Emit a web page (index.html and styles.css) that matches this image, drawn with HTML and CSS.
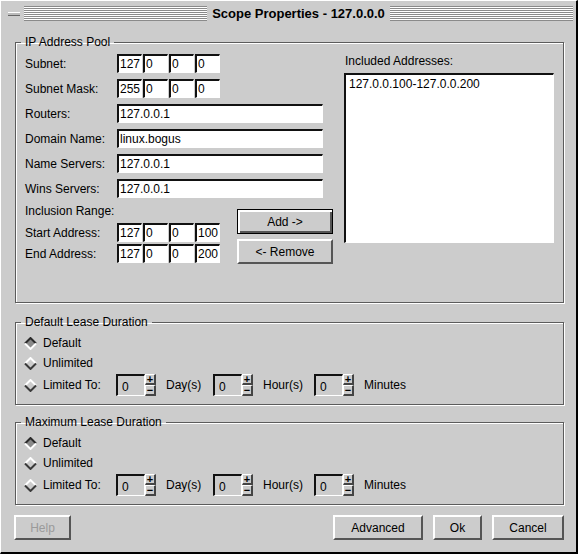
FILE: index.html
```html
<!DOCTYPE html>
<html lang="en">
<head>
    <meta charset="UTF-8">
    <title>Scope Properties - 127.0.0.0</title>
    <link rel="stylesheet" href="styles.css">
</head>
<body>
    <div class="window">
        <div class="titlebar">
            <span class="min-btn"></span>
            <span class="stripes stripes-left"></span>
            <span class="title">Scope Properties - 127.0.0.0</span>
            <span class="stripes"></span>
        </div>

        <div class="dialog">
            <!-- IP address pool -->
            <fieldset class="group pool">
                <legend>IP Address Pool</legend>
                <div class="pool-body">
                    <div class="pool-left">
                        <div class="form-row">
                            <label>Subnet:</label>
                            <div class="ip">
                                <input class="field" value="127"><input class="field" value="0"><input class="field" value="0"><input class="field" value="0">
                            </div>
                        </div>
                        <div class="form-row">
                            <label>Subnet Mask:</label>
                            <div class="ip">
                                <input class="field" value="255"><input class="field" value="0"><input class="field" value="0"><input class="field" value="0">
                            </div>
                        </div>
                        <div class="form-row">
                            <label>Routers:</label>
                            <input class="field wide" value="127.0.0.1">
                        </div>
                        <div class="form-row">
                            <label>Domain Name:</label>
                            <input class="field wide" value="linux.bogus">
                        </div>
                        <div class="form-row">
                            <label>Name Servers:</label>
                            <input class="field wide" value="127.0.0.1">
                        </div>
                        <div class="form-row">
                            <label>Wins Servers:</label>
                            <input class="field wide" value="127.0.0.1">
                        </div>

                        <div class="range">
                            <div class="range-fields">
                                <div class="range-title">Inclusion Range:</div>
                                <div class="form-row range-row">
                                    <label>Start Address:</label>
                                    <div class="ip">
                                        <input class="field" value="127"><input class="field" value="0"><input class="field" value="0"><input class="field" value="100">
                                    </div>
                                </div>
                                <div class="form-row range-row tight">
                                    <label>End Address:</label>
                                    <div class="ip">
                                        <input class="field" value="127"><input class="field" value="0"><input class="field" value="0"><input class="field" value="200">
                                    </div>
                                </div>
                            </div>
                            <div class="range-buttons">
                                <button class="btn btn-default">Add -&gt;</button>
                                <button class="btn">&lt;- Remove</button>
                            </div>
                        </div>
                    </div>

                    <div class="pool-right">
                        <div class="list-label">Included Addresses:</div>
                        <div class="listbox">
                            <div class="list-item">127.0.0.100-127.0.0.200</div>
                        </div>
                    </div>
                </div>
            </fieldset>

            <!-- Default lease -->
            <fieldset class="group lease">
                <legend>Default Lease Duration</legend>
                <div class="radio-row">
                    <svg class="diamond on" viewBox="0 0 13 13"><path class="fill" d="M6.5 1 L12 6.5 L6.5 12 L1 6.5 Z"/><path class="upper" d="M1 6.5 L6.5 1 L12 6.5"/><path class="lower" d="M1 6.5 L6.5 12 L12 6.5"/></svg>
                    <span>Default</span>
                </div>
                <div class="radio-row">
                    <svg class="diamond" viewBox="0 0 13 13"><path class="fill" d="M6.5 1 L12 6.5 L6.5 12 L1 6.5 Z"/><path class="upper" d="M1 6.5 L6.5 1 L12 6.5"/><path class="lower" d="M1 6.5 L6.5 12 L12 6.5"/></svg>
                    <span>Unlimited</span>
                </div>
                <div class="radio-row limited">
                    <svg class="diamond" viewBox="0 0 13 13"><path class="fill" d="M6.5 1 L12 6.5 L6.5 12 L1 6.5 Z"/><path class="upper" d="M1 6.5 L6.5 1 L12 6.5"/><path class="lower" d="M1 6.5 L6.5 12 L12 6.5"/></svg>
                    <span class="limit-label">Limited To:</span>
                    <div class="spinner"><input class="spin-field" value="0"><div class="spin-btns"><span class="spin-up">+</span><span class="spin-down">−</span></div></div>
                    <span class="unit days">Day(s)</span>
                    <div class="spinner"><input class="spin-field" value="0"><div class="spin-btns"><span class="spin-up">+</span><span class="spin-down">−</span></div></div>
                    <span class="unit hours">Hour(s)</span>
                    <div class="spinner"><input class="spin-field" value="0"><div class="spin-btns"><span class="spin-up">+</span><span class="spin-down">−</span></div></div>
                    <span class="unit">Minutes</span>
                </div>
            </fieldset>

            <!-- Maximum lease -->
            <fieldset class="group lease max">
                <legend>Maximum Lease Duration</legend>
                <div class="radio-row">
                    <svg class="diamond on" viewBox="0 0 13 13"><path class="fill" d="M6.5 1 L12 6.5 L6.5 12 L1 6.5 Z"/><path class="upper" d="M1 6.5 L6.5 1 L12 6.5"/><path class="lower" d="M1 6.5 L6.5 12 L12 6.5"/></svg>
                    <span>Default</span>
                </div>
                <div class="radio-row">
                    <svg class="diamond" viewBox="0 0 13 13"><path class="fill" d="M6.5 1 L12 6.5 L6.5 12 L1 6.5 Z"/><path class="upper" d="M1 6.5 L6.5 1 L12 6.5"/><path class="lower" d="M1 6.5 L6.5 12 L12 6.5"/></svg>
                    <span>Unlimited</span>
                </div>
                <div class="radio-row limited">
                    <svg class="diamond" viewBox="0 0 13 13"><path class="fill" d="M6.5 1 L12 6.5 L6.5 12 L1 6.5 Z"/><path class="upper" d="M1 6.5 L6.5 1 L12 6.5"/><path class="lower" d="M1 6.5 L6.5 12 L12 6.5"/></svg>
                    <span class="limit-label">Limited To:</span>
                    <div class="spinner"><input class="spin-field" value="0"><div class="spin-btns"><span class="spin-up">+</span><span class="spin-down">−</span></div></div>
                    <span class="unit days">Day(s)</span>
                    <div class="spinner"><input class="spin-field" value="0"><div class="spin-btns"><span class="spin-up">+</span><span class="spin-down">−</span></div></div>
                    <span class="unit hours">Hour(s)</span>
                    <div class="spinner"><input class="spin-field" value="0"><div class="spin-btns"><span class="spin-up">+</span><span class="spin-down">−</span></div></div>
                    <span class="unit">Minutes</span>
                </div>
            </fieldset>

            <div class="button-row">
                <button class="btn help" disabled>Help</button>
                <span class="spacer"></span>
                <button class="btn advanced">Advanced</button>
                <button class="btn ok">Ok</button>
                <button class="btn cancel">Cancel</button>
            </div>
        </div>
    </div>
</body>
</html>
```

FILE: styles.css
```css
* {
    box-sizing: border-box;
}

body {
    margin: 0;
    background-color: #cccccc;
    font-family: "Liberation Sans", Arial, sans-serif;
    font-size: 12px;
    color: #000;
}

.window {
    width: 578px;
    height: 554px;
    background-color: #cccccc;
    border-top: 1px solid #fff;
    border-left: 1px solid #fff;
    border-right: 2px solid #000;
    border-bottom: 2px solid #000;
}

/* title bar */
.titlebar {
    display: flex;
    align-items: center;
    height: 23px;
    padding: 0 3px 0 7px;
}

.min-btn {
    flex-shrink: 0;
    width: 12px;
    height: 4px;
    margin-top: 3px;
    background-color: #bbbbbb;
    border-top: 1px solid #fff;
    border-bottom: 1px solid #666;
}

.stripes {
    flex: 1;
    height: 15px;
    margin-top: 2px;
    background: repeating-linear-gradient(to bottom, #8a8a8a 0, #8a8a8a 1px, #fff 1px, #fff 2px);
}

.stripes-left {
    margin-left: 4px;
}

.title {
    padding: 0 5px;
    margin-top: 2px;
    font-weight: bold;
    font-size: 13px;
    white-space: nowrap;
}

.dialog {
    padding: 11px 0 0 14px;
}

/* group frames */
.group {
    margin: 0;
    padding: 0 8px;
    width: 549px;
    border: 1px solid #5c5c5c;
    box-shadow: inset 1px 1px 0 #fff, 1px 1px 0 #fff;
    min-width: 0;
}

.group legend {
    margin-left: -3px;
    padding: 0 4px;
    line-height: 14px;
}

.pool {
    height: 268px;
    padding-top: 5px;
}

.pool-body {
    display: flex;
}

.pool-left {
    width: 309px;
}

.pool-right {
    margin-left: 11px;
    width: 210px;
}

.form-row {
    display: flex;
    align-items: center;
    height: 19px;
    margin-bottom: 6px;
}

.form-row label {
    width: 93px;
    flex-shrink: 0;
    padding-left: 1px;
}

.ip {
    display: flex;
    gap: 1px;
}

.field {
    width: 25px;
    height: 19px;
    margin: 0;
    padding: 0 0 0 1px;
    font-family: inherit;
    font-size: 12px;
    color: #000;
    background-color: #fff;
    border-style: solid;
    border-width: 2px 1px 1px 2px;
    border-color: #111 #fff #fff #111;
    outline: none;
}

.field.wide {
    width: 206px;
}

.range {
    display: flex;
}

.range-fields {
    width: 196px;
}

.range-title {
    line-height: 14px;
    padding-left: 1px;
}

.range-row {
    margin-top: 5px;
    margin-bottom: 0;
}

.range-row.tight {
    margin-top: 2px;
}

.range-buttons {
    display: flex;
    flex-direction: column;
    gap: 5px;
    margin-left: 17px;
    margin-top: 5px;
}

.range-buttons .btn {
    width: 96px;
}

.list-label {
    line-height: 14px;
    padding-left: 1px;
    margin-bottom: 5px;
}

.listbox {
    height: 170px;
    background-color: #fff;
    border-style: solid;
    border-width: 2px 1px 1px 2px;
    border-color: #111 #fff #fff #111;
    padding: 2px 3px;
}

.list-item {
    line-height: 14px;
}

/* buttons */
.btn {
    height: 25px;
    margin: 0;
    padding: 0;
    font-family: inherit;
    font-size: 12px;
    color: #000;
    background-color: #cccccc;
    border: 2px solid;
    border-color: #fff #555 #555 #fff;
}

.btn-default {
    border: 1px solid #000;
    box-shadow: inset 2px 2px 0 #fff, inset -2px -2px 0 #555;
}

.btn:disabled {
    color: #9a9a9a;
}

/* lease groups */
.lease {
    height: 90px;
    margin-top: 12px;
    padding-top: 4px;
}

.lease.max {
    margin-top: 10px;
}

.radio-row {
    display: flex;
    align-items: center;
    height: 20px;
}

.radio-row.limited {
    height: 22px;
    margin-top: 1px;
}

.diamond {
    width: 13px;
    height: 13px;
    margin-right: 6px;
    flex-shrink: 0;
}

.diamond path {
    fill: none;
    stroke-width: 2;
}

.diamond .fill {
    fill: #cccccc;
    stroke: none;
}

.diamond .upper {
    stroke: #fff;
}

.diamond .lower {
    stroke: #3a3a3a;
}

.diamond.on .fill {
    fill: #8a8a8a;
}

.diamond.on .upper {
    stroke: #2a2a2a;
}

.diamond.on .lower {
    stroke: #fff;
}

.limit-label {
    width: 73px;
}

.spinner {
    display: flex;
    height: 22px;
    margin-right: 10px;
}

.spin-field {
    width: 29px;
    height: 22px;
    margin: 0;
    padding: 2px 0 0 4px;
    font-family: inherit;
    font-size: 12px;
    background-color: #cccccc;
    border-style: solid;
    border-width: 2px 1px 1px 2px;
    border-color: #111 #fff #fff #111;
    outline: none;
}

.spin-btns {
    display: flex;
    flex-direction: column;
    width: 11px;
}

.spin-up,
.spin-down {
    height: 11px;
    font-size: 11px;
    line-height: 8px;
    font-weight: bold;
    text-align: center;
    background-color: #cccccc;
    border-style: solid;
    border-width: 1px 2px 2px 1px;
    border-color: #fff #444 #444 #fff;
    overflow: hidden;
}

.unit {
    white-space: nowrap;
}

.unit.days {
    width: 47px;
}

.unit.hours {
    width: 51px;
}

/* bottom buttons */
.button-row {
    display: flex;
    gap: 10px;
    margin-top: 10px;
    margin-left: -1px;
    width: 550px;
}

.spacer {
    flex: 1;
}

.help {
    width: 57px;
}

.advanced {
    width: 90px;
}

.ok {
    width: 49px;
}

.cancel {
    width: 72px;
}
```
